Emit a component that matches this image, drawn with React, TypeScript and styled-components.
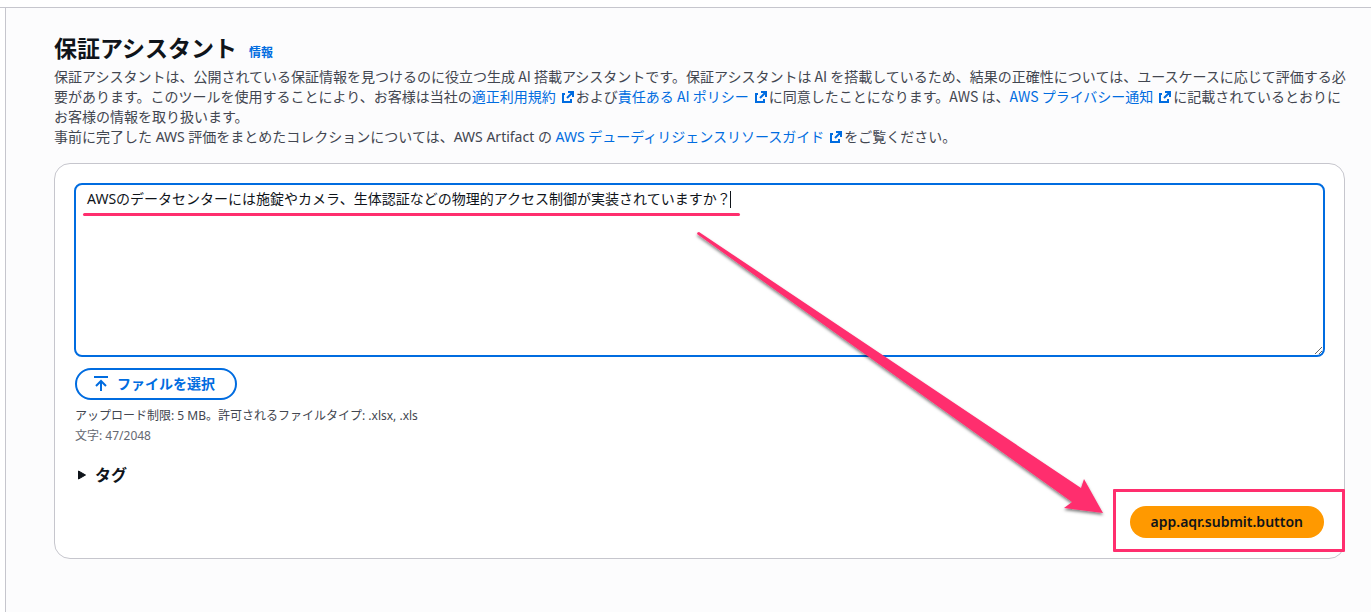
import React, { useState } from "react";
import styled, { createGlobalStyle } from "styled-components";

const baseFont = `"Noto Sans", "Noto Sans CJK JP", sans-serif`;
const narrowFont = `"Noto Sans CJK JP", sans-serif`;

const GlobalStyle = createGlobalStyle`
  * {
    box-sizing: border-box;
  }
  body {
    margin: 0;
    background: #ffffff;
    color: #0f141a;
    font-family: ${baseFont};
    font-size: 14px;
    line-height: 20px;
  }
`;

const pink = "#ff2e6e";
const blue = "#006ce0";

const Shell = styled.div`
  display: flex;
  flex-direction: column;
  min-height: 100vh;
  padding: 7px 0 0 5px;
  background: linear-gradient(#c6c6cd, #c6c6cd) 0 7px / 100% 1px no-repeat;
`;

const Main = styled.main`
  flex: 1;
  margin-top: 1px;
  padding: 24px 26px 48px 48px;
  border-left: 1px solid #c6c6cd;
  background: #fcfcfd;
`;

const Header = styled.header`
  display: flex;
  align-items: baseline;
  gap: 12px;
  margin-bottom: 2px;
`;

const Title = styled.h1`
  margin: 0;
  font-size: 23px;
  line-height: 32px;
  font-weight: 700;
`;

const InfoLink = styled.a`
  color: ${blue};
  font-size: 12px;
  line-height: 16px;
  font-weight: 700;
  text-decoration: none;
`;

const Intro = styled.div`
  display: flex;
  flex-direction: column;
  gap: 1px;
  margin-right: -2px;
`;

const Description = styled.p<{ $narrow?: boolean }>`
  margin: 0;
  color: #424650;
  font-family: ${(p) => (p.$narrow ? narrowFont : baseFont)};
`;

const Link = styled.a`
  color: ${blue};
  text-decoration: none;

  svg {
    margin-left: 4px;
    vertical-align: -3px;
  }
`;

const Card = styled.section`
  position: relative;
  display: flex;
  flex-direction: column;
  align-items: flex-start;
  margin-top: 16px;
  padding: 19px 19px 20px;
  border: 1px solid #c6c6cd;
  border-radius: 16px;
  background: #ffffff;
`;

const Field = styled.div`
  position: relative;
  width: 100%;
`;

const Question = styled.textarea`
  display: block;
  width: 100%;
  height: 174px;
  padding: 4px 11px;
  border: 2px solid ${blue};
  border-radius: 8px;
  outline: none;
  background: #ffffff;
  color: #0f141a;
  font: inherit;
  resize: vertical;
`;

const Caret = styled.span`
  position: absolute;
  top: 8px;
  left: 656px;
  width: 1px;
  height: 17px;
  background: #0f141a;
`;

const Underline = styled.span`
  position: absolute;
  top: 30px;
  left: 9px;
  width: 657px;
  height: 3px;
  border-radius: 2px;
  background: ${pink};
`;

const UploadButton = styled.button`
  display: flex;
  align-items: center;
  gap: 8px;
  height: 32px;
  margin: 11px 0 0 1px;
  padding: 0 20px 0 16px;
  border: 2px solid ${blue};
  border-radius: 16px;
  background: #ffffff;
  color: ${blue};
  font: inherit;
  font-weight: 700;
`;

const Hint = styled.p<{ $muted?: boolean }>`
  margin: 0 0 0 1px;
  color: ${(p) => (p.$muted ? "#656871" : "#424650")};
  font-size: 12px;
  line-height: 20px;
`;

const Hints = styled.div`
  margin-top: 6px;
`;

const TagToggle = styled.button`
  display: flex;
  align-items: center;
  gap: 9px;
  margin-top: 19px;
  padding: 0 4px;
  border: 0;
  background: transparent;
  color: #0f141a;
  font: inherit;
  font-size: 16px;
  line-height: 20px;
  font-weight: 700;
`;

const Actions = styled.div`
  position: relative;
  align-self: flex-end;
  margin-top: 21px;
  padding-right: 1px;
`;

const SubmitButton = styled.button`
  display: block;
  height: 32px;
  padding: 0 21px;
  border: 0;
  border-radius: 16px;
  background: #ff9900;
  color: #0f141a;
  font: inherit;
  font-weight: 600;
`;

const Highlight = styled.span`
  position: absolute;
  inset: -17px -20px -14px -17px;
  border: 3px solid ${pink};
  border-radius: 1px;
  pointer-events: none;
`;

const Arrow = styled.svg`
  position: absolute;
  right: 234px;
  bottom: 36px;
  pointer-events: none;
`;

const ExternalIcon = () => (
  <svg width="16" height="16" viewBox="0 0 16 16" fill="none" stroke={blue} strokeWidth="2" aria-hidden="true">
    <path d="M8 3h5v5M13 3 7 9M5 5H3v8h8v-3" />
  </svg>
);

const UploadIcon = () => (
  <svg width="16" height="16" viewBox="0 0 16 16" fill="none" stroke={blue} strokeWidth="2" aria-hidden="true">
    <path d="M1 1h14M8 15V5M3 10l5-5 5 5" />
  </svg>
);

const TriangleIcon = () => (
  <svg width="8" height="10" viewBox="0 0 8 10" aria-hidden="true">
    <path d="M.5 1v8L7.5 5Z" fill="#0f141a" stroke="#0f141a" strokeLinejoin="round" />
  </svg>
);

const ExternalLink = ({ children }: { children: React.ReactNode }) => (
  <Link href="#">
    {children}
    <ExternalIcon />
  </Link>
);

export default function App() {
  const [question, setQuestion] = useState(
    "AWSのデータセンターには施錠やカメラ、生体認証などの物理的アクセス制御が実装されていますか？"
  );

  return (
    <>
      <GlobalStyle />
      <Shell>
        <Main>
          <Header>
            <Title>保証アシスタント</Title>
            <InfoLink href="#">情報</InfoLink>
          </Header>
          <Intro>
            <Description $narrow>
              保証アシスタントは、公開されている保証情報を見つけるのに役立つ生成 AI 搭載アシスタントです。保証アシスタントは AI を搭載しているため、結果の正確性については、ユースケースに応じて評価する必要があります。このツールを使用することにより、お客様は当社の
              <ExternalLink>適正利用規約</ExternalLink>および
              <ExternalLink>責任ある AI ポリシー</ExternalLink>
              に同意したことになります。AWS は、
              <ExternalLink>AWS プライバシー通知</ExternalLink>
              に記載されているとおりにお客様の情報を取り扱います。
            </Description>
            <Description>
              事前に完了した AWS 評価をまとめたコレクションについては、AWS Artifact の{" "}
              <ExternalLink>AWS デューディリジェンスリソースガイド</ExternalLink>
              をご覧ください。
            </Description>
          </Intro>

          <Card>
            <Field>
              <Question
                aria-label="質問"
                spellCheck={false}
                value={question}
                onChange={(e) => setQuestion(e.target.value)}
              />
              <Caret />
              <Underline />
            </Field>
            <UploadButton type="button">
              <UploadIcon />
              ファイルを選択
            </UploadButton>
            <Hints>
              <Hint>アップロード制限: 5 MB。許可されるファイルタイプ: .xlsx, .xls</Hint>
              <Hint $muted>文字: 47/2048</Hint>
            </Hints>
            <TagToggle type="button" aria-expanded={false}>
              <TriangleIcon />
              タグ
            </TagToggle>
            <Actions>
              <SubmitButton type="submit">app.aqr.submit.button</SubmitButton>
              <Highlight />
            </Actions>
            <Arrow width="420" height="300" viewBox="690 222 420 300" aria-hidden="true">
              <defs>
                <filter id="arrow-shadow" x="-5%" y="-5%" width="110%" height="110%">
                  <feDropShadow dx="0" dy="2" stdDeviation="1.5" floodColor="#000000" floodOpacity="0.5" />
                </filter>
              </defs>
              <path
                d="M699 232 Q697 232 697 234L1072 502 1064 508 1103 513 1084 479 1081 488Z"
                fill={pink}
                filter="url(#arrow-shadow)"
              />
            </Arrow>
          </Card>
        </Main>
      </Shell>
    </>
  );
}
